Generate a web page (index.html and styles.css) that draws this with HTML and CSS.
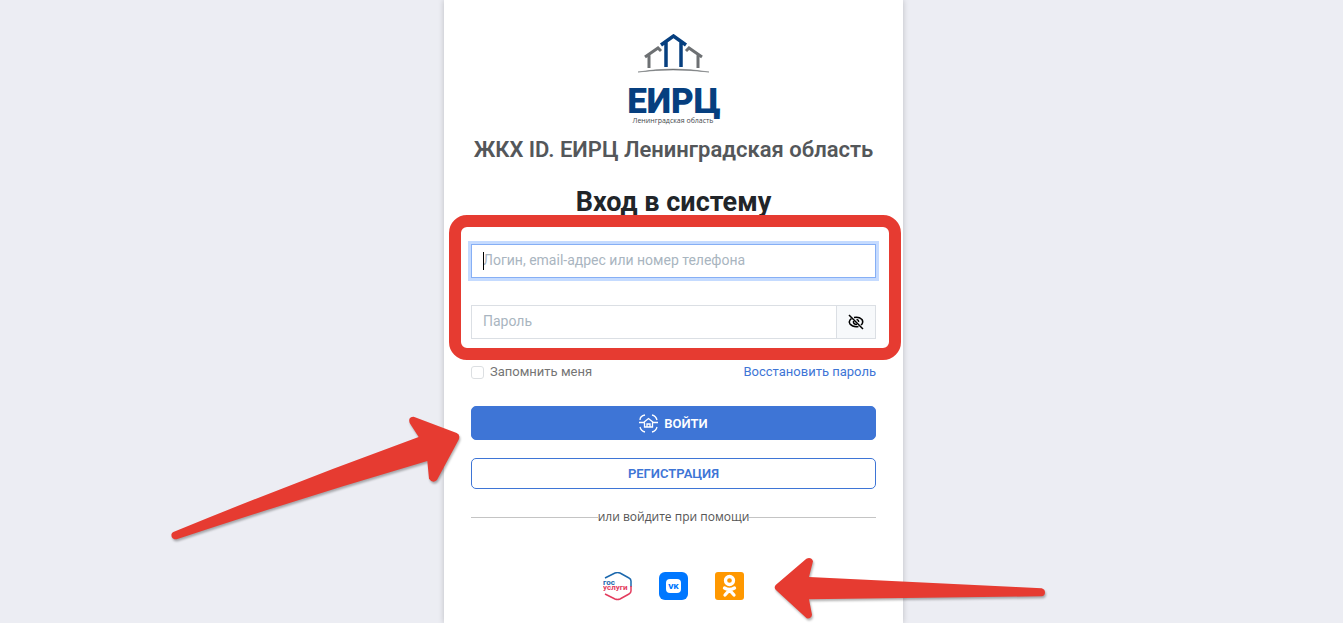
FILE: index.html
```html
<!DOCTYPE html>
<html lang="ru">
<head>
  <meta charset="UTF-8">
  <meta name="viewport" content="width=device-width, initial-scale=1.0">
  <title>ЖКХ ID. Вход в систему</title>
  <link rel="stylesheet" href="styles.css">
</head>
<body>

  <main class="card">
    <svg class="logo" viewBox="0 0 94 92" role="img" aria-label="ЕИРЦ Ленинградская область">
      <g fill="none" stroke="#6d7073" stroke-width="3">
        <path d="M22 34V21M18 23L31 14L34 17"/>
        <path d="M71 34V21M75 23L62 14L59 17"/>
      </g>
      <path d="M11 38Q46 32 82 38Q46 34 11 38Z" fill="#6d7073" stroke="#6d7073" stroke-width=".5"/>
      <path d="M39 33V8M54 33V8M34 11L46.500 2L59 11" fill="none" stroke="#063f7f" stroke-width="3.500"/>
      <text class="logo-name" x="47" y="79" text-anchor="middle">ЕИРЦ</text>
      <text class="logo-region" x="46" y="89" text-anchor="middle">Ленинградская область</text>
    </svg>

    <h2 class="org">ЖКХ ID. ЕИРЦ Ленинградская область</h2>
    <h1 class="title">Вход в систему</h1>

    <form id="loginForm">
      <div class="fields">
        <div class="field focused">
          <input type="text" id="login" name="login" aria-label="Логин" placeholder="Логин, email-адрес или номер телефона">
        </div>
        <div class="field">
          <input type="password" id="password" name="password" aria-label="Пароль" placeholder="Пароль">
          <button type="button" class="eye" aria-label="Показать пароль">
            <svg width="18" height="18" viewBox="0 0 18 18" fill="none" stroke="#000" stroke-width="1.500">
              <path d="M7 4.500Q12 3.500 15 6.500Q16.500 9 15 11L14 12M11.500 13.500Q6 14.500 3 11Q1.500 9 3 7L4.500 5.500"/>
              <path d="M6.500 8Q6 11.500 10 11.500M9.500 6.500Q12 7 11.500 9"/>
              <path d="M2 2L16 16"/>
            </svg>
          </button>
        </div>
      </div>

      <div class="options">
        <label for="remember"><input type="checkbox" id="remember" name="remember">Запомнить меня</label>
        <a href="#">Восстановить пароль</a>
      </div>

      <button type="submit" class="btn btn-login">
        <svg width="19" height="19" viewBox="0 0 19 19" fill="none" stroke="#fff" stroke-width="1.300">
          <path d="M1 6Q1 2 6 1M13 1Q17 2 18 6M1 13Q2 17 6 18M13 18Q17 17 18 13"/>
          <path d="M0 8.500H4.500L9.500 4.500L14.500 8.500H19M5.500 8.500V13H13.500V8.500M8 13V10H11V13"/>
        </svg>
        ВОЙТИ
      </button>
      <button type="button" class="btn btn-register">РЕГИСТРАЦИЯ</button>
    </form>

    <div class="divider">или войдите при помощи</div>

    <div class="socials">
      <a href="#" aria-label="Госуслуги">
        <svg width="29" height="29" viewBox="0 0 29 29">
          <g fill="none" stroke-width="1.500">
            <path d="M2 6L12 1Q14.500 0 17 1L26 6Q28 7 28 9V15" stroke="#1b68ad"/>
            <path d="M28 14V19Q28 21 26 22L17 27Q14.500 28 12 27L2 22" stroke="#e33c5e"/>
          </g>
          <text class="gos" x="0" y="13" fill="#1b68ad">гос</text>
          <text class="gos" x="0" y="18" fill="#e33c5e">услуги</text>
        </svg>
      </a>
      <a href="#" aria-label="VK">
        <svg width="29" height="29" viewBox="0 0 29 29">
          <rect width="29" height="28" rx="6" fill="#07f"/>
          <rect x="7" y="7" width="15" height="14" rx="4" fill="#fff"/>
          <text class="vk" x="14.500" y="17" text-anchor="middle">VK</text>
        </svg>
      </a>
      <a href="#" aria-label="Одноклассники">
        <svg width="29" height="29" viewBox="0 0 29 29">
          <rect width="29" height="28" rx="3" fill="#ff9800"/>
          <g fill="none" stroke="#fff" stroke-width="3.300" stroke-linecap="round">
            <circle cx="14.500" cy="8.500" r="4"/>
            <path d="M9.500 16Q14.500 19 19.500 16M14.500 18L10 23M14.500 18L19 23"/>
          </g>
        </svg>
      </a>
    </div>

    <svg class="arrow arrow-login" viewBox="0 0 960 450" aria-hidden="true">
      <path d="M40 396Q400 248 776 111L749 69Q743 50 761 50L890 99Q902 104 896 119L831 240Q818 252 807 236L802 183Q430 292 50 418Q34 418 34 404Q35 398 40 396Z"/>
    </svg>
    <svg class="arrow arrow-social" viewBox="0 0 900 234" aria-hidden="true">
      <path d="M147 96L845 130Q855 133 855 143Q854 153 845 154L147 163L156 209Q154 222 140 220L47 134Q41 127 47 120L139 41Q154 35 159 49Z"/>
    </svg>
  </main>

</body>
</html>
```

FILE: styles.css
```css
* {
  box-sizing: border-box;
}
body {
  margin: 0;
  padding-left: 4px;
  background: #ecedf3;
  font-family: Roboto, "Liberation Sans", sans-serif;
  overflow-x: hidden;
}
.card {
  position: relative;
  max-width: 459px;
  min-height: 100vh;
  margin: 0 auto;
  padding: 34px 27px 20px;
  background: #fff;
  box-shadow: 0 0 6px rgba(0, 0, 0, 0.2);
}
.logo {
  display: block;
  width: 94px;
  height: 92px;
  margin: 0 auto;
}
.logo-name {
  font: 900 35px Roboto, sans-serif;
  fill: #063f7f;
}
.logo-region {
  font: 7px "Open Sans", sans-serif;
  fill: #45484c;
}
h1, h2 {
  margin: 0;
  text-align: center;
}
.org {
  margin-top: 9px;
  font-size: 22px;
  font-weight: 600;
  line-height: 30px;
  color: #54575a;
  white-space: nowrap;
}
.title {
  margin-top: 19px;
  font-size: 27px;
  line-height: 36px;
  color: #212529;
}
.fields {
  position: relative;
  display: grid;
  gap: 27px;
  margin-top: 24px;
}
/* red frame around both inputs */
.fields::after {
  content: "";
  position: absolute;
  inset: -29px -25px -21px -22px;
  border: 12px solid #e63b31;
  border-radius: 18px;
  pointer-events: none;
}
.field {
  position: relative;
  display: flex;
  height: 34px;
  border: 1px solid #dbdfe4;
}
.focused {
  border-color: #86aff5;
  box-shadow: 0 0 0 3px #c5dbff;
}
.focused::before {
  content: "";
  position: absolute;
  left: 11px;
  top: 7px;
  width: 1px;
  height: 18px;
  background: #000;
}
.field input {
  flex: 1;
  min-width: 0;
  padding: 0 11px 2px;
  border: 0;
  outline: 0;
  background: none;
  font: 14px Roboto, sans-serif;
}
.field input::placeholder {
  color: #a9b5c0;
}
.eye {
  display: flex;
  align-items: center;
  justify-content: center;
  width: 39px;
  padding: 0;
  border: 0;
  border-left: 1px solid #dbdfe4;
  background: #f7f9fb;
}
.options {
  display: flex;
  justify-content: space-between;
  margin-top: 23px;
  font-size: 13px;
  line-height: 20px;
  color: #757575;
}
.options label {
  display: flex;
  align-items: center;
  gap: 6px;
}
.options input {
  appearance: none;
  width: 13px;
  height: 13px;
  margin: 0;
  border: 1px solid #dcdfe2;
  border-radius: 3px;
}
.options a {
  color: #3e75d6;
  text-decoration: none;
}
.btn {
  display: flex;
  align-items: center;
  justify-content: center;
  gap: 6px;
  width: 100%;
  border: 1px solid #3e75d6;
  border-radius: 5px;
  font: 600 13px Roboto, sans-serif;
}
.btn-login {
  height: 34px;
  margin-top: 24px;
  background: #3e75d6;
  color: #fff;
}
.btn-register {
  height: 31px;
  margin-top: 18px;
  background: #fff;
  color: #3e75d6;
}
.divider {
  display: flex;
  align-items: center;
  margin-top: 18px;
  font: 12px/20px "Open Sans", sans-serif;
  color: #555;
}
.divider::before,
.divider::after {
  content: "";
  flex: 1;
  height: 1px;
  background: #c4c4c4;
}
.socials {
  display: flex;
  justify-content: center;
  gap: 27px;
  margin-top: 45px;
}
.socials svg {
  display: block;
}
.gos {
  font: bold 8px Roboto, sans-serif;
}
.vk {
  font: 900 8px Roboto, sans-serif;
  fill: #07f;
}
.arrow {
  position: absolute;
  fill: #e63b31;
  filter: drop-shadow(1px 2px 1px rgba(0, 0, 0, 0.3));
  pointer-events: none;
}
.arrow-login {
  left: -284px;
  top: 400px;
  width: 320px;
  height: 150px;
}
.arrow-social {
  left: 316px;
  top: 545px;
  width: 300px;
  height: 78px;
}
```
